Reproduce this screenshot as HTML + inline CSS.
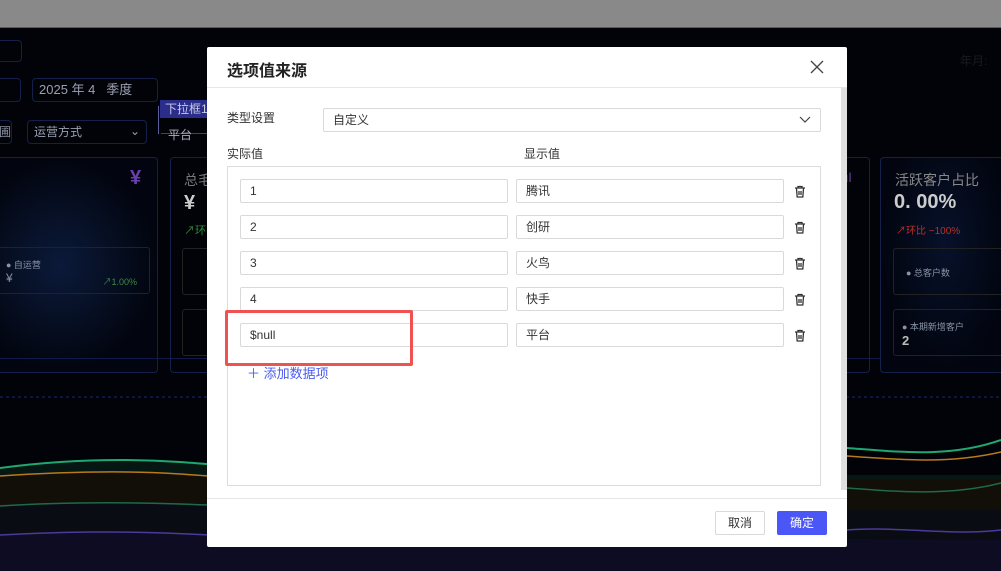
<!DOCTYPE html>
<html><head><meta charset="utf-8"><style>
*{box-sizing:border-box;margin:0;padding:0}
body{width:1001px;height:571px;overflow:hidden;position:relative;background:#020309;font-family:"Liberation Sans","Noto Sans CJK SC",sans-serif;font-size:12px}
.a{position:absolute}
.dk{border:1px solid #14204a;border-radius:4px}
.in{position:absolute;height:24px;border:1px solid #d9d9d9;border-radius:2px;background:#fff;color:#333;font-size:12px;line-height:22px;padding-left:9px}
</style></head><body>
<div class="a" style="left:0;top:0;width:1001px;height:27px;background:#898989"></div>
<div class="a" style="left:0;top:27px;width:1001px;height:1px;background:#5a5a5a"></div>
<svg class="a" style="left:0;top:380px" width="1001" height="191">
<line x1="0" y1="17" x2="1001" y2="17" stroke="#1a2a70" stroke-dasharray="3,3"/>
<path d="M0,88 C60,80 120,78 180,82 C240,86 300,95 360,88 C420,80 480,88 540,95 L1001,95 L1001,191 L0,191Z" fill="#061612"/>
<path d="M0,96 C60,92 120,90 180,94 C240,98 300,104 360,100 L1001,100 L1001,191 L0,191Z" fill="#120e08"/>
<path d="M0,126 C60,122 120,122 180,124 C240,126 300,130 360,128 L1001,130 L1001,191 L0,191Z" fill="#0a0c14"/>
<path d="M0,155 C60,152 120,150 210,155 L1001,160 L1001,191 L0,191Z" fill="#0e0c22"/>
<path d="M0,88 C60,80 120,78 180,82 C240,86 300,95 360,88" stroke="#1fa870" stroke-width="2" fill="none"/>
<path d="M0,96 C60,92 120,90 180,94 C240,98 300,104 360,100" stroke="#b87a1a" stroke-width="1.5" fill="none"/>
<path d="M0,126 C60,122 120,122 180,124 C240,126 300,130 360,128" stroke="#1e6a4a" stroke-width="1.5" fill="none"/>
<path d="M0,155 C60,152 120,150 210,155" stroke="#4a3a9a" stroke-width="1.5" fill="none"/>
<path d="M847,68 C900,72 950,78 1001,60" stroke="#1fa870" stroke-width="2" fill="none"/>
<path d="M847,76 C900,80 950,84 1001,72" stroke="#b87a1a" stroke-width="1.5" fill="none"/>
<path d="M847,108 C900,112 950,116 1001,103" stroke="#1e6a4a" stroke-width="1.5" fill="none"/>
<path d="M847,150 C900,146 950,156 1001,150" stroke="#4a3a9a" stroke-width="1.5" fill="none"/>
</svg>
<div class="a dk" style="left:-5px;top:40px;width:27px;height:22px"></div>
<div class="a dk" style="left:-5px;top:78px;width:26px;height:24px"></div>
<div class="a dk" style="left:32px;top:78px;width:126px;height:24px;color:#9aa0b0;font-size:13px;line-height:22px;padding-left:6px">2025 年 4 &nbsp;&nbsp;季度</div>
<div class="a dk" style="left:-5px;top:120px;width:17px;height:24px;color:#8a90a0;line-height:22px;text-align:right">圃</div>
<div class="a dk" style="left:27px;top:120px;width:120px;height:24px;color:#9aa0b0;line-height:22px;padding-left:6px">运营方式<span style="position:absolute;right:6px;top:-1px">⌄</span></div>
<div class="a" style="left:160px;top:100px;width:50px;height:18px;background:#2a2e8a;color:#c8cbe8;font-size:12px;line-height:18px;padding-left:5px">下拉框1</div>
<div class="a" style="left:161px;top:133px;width:50px;height:1px;background:#3a3e8a"></div>
<div class="a" style="left:158px;top:106px;width:7px;height:28px;border-left:1px solid #5a5e9a"></div>
<div class="a" style="left:168px;top:126px;color:#aab0c0">平台</div>
<div class="a dk" style="left:-5px;top:157px;width:163px;height:216px;background:radial-gradient(ellipse at 40% 50%,#0b1a3a,#02050f 70%)"></div>
<div class="a" style="left:130px;top:167px;color:#6a3fae;font-size:20px;font-weight:bold">¥</div>
<div class="a" style="left:-5px;top:247px;width:155px;height:47px;border:1px solid #222;border-radius:3px;color:#8b93a6;font-size:9px;padding:10px 0 0 10px">● 自运营<br><span style="font-size:12px">¥</span><span style="position:absolute;right:12px;top:27px;color:#3c8a40">↗1.00%</span></div>
<div class="a dk" style="left:170px;top:157px;width:40px;height:216px"></div>
<div class="a" style="left:184px;top:170px;color:#777;font-size:14px">总毛</div>
<div class="a" style="left:184px;top:192px;color:#ccc;font-size:20px;font-weight:bold">¥</div>
<div class="a" style="left:184px;top:222px;color:#2f8c3a;font-size:11px">↗环</div>
<div class="a" style="left:182px;top:248px;width:30px;height:47px;border:1px solid #222;border-radius:3px"></div>
<div class="a" style="left:182px;top:309px;width:30px;height:47px;border:1px solid #222;border-radius:3px"></div>
<div class="a" style="left:0;top:358px;width:1001px;height:1px;background:#0f1a4a"></div>
<div class="a dk" style="left:840px;top:157px;width:30px;height:216px"></div>
<div class="a" style="left:845px;top:170px;color:#6a3fae;font-size:13px">ıl</div>
<div class="a dk" style="left:880px;top:157px;width:130px;height:216px;background:radial-gradient(ellipse at 50% 40%,#07112a,#02050f 70%)"></div>
<div class="a" style="left:895px;top:170px;color:#888;font-size:14px">活跃客户占比</div>
<div class="a" style="left:894px;top:191px;color:#ccc;font-size:20px;font-weight:bold">0. 00%</div>
<div class="a" style="left:896px;top:222px;color:#b8302a;font-size:10px">↗环比 −100%</div>
<div class="a" style="left:893px;top:248px;width:120px;height:47px;border:1px solid #222;border-radius:3px;color:#8b93a6;font-size:9px;padding:17px 0 0 12px">● 总客户数</div>
<div class="a" style="left:893px;top:309px;width:120px;height:47px;border:1px solid #222;border-radius:3px;color:#8b93a6;font-size:9px;padding:10px 0 0 8px">● 本期新增客户<br><span style="font-size:13px;color:#bbb;font-weight:bold">2</span></div>
<div class="a" style="left:960px;top:52px;color:#1a1a22;font-size:12px">年月:</div>
<div class="a" style="left:207px;top:47px;width:640px;height:500px;background:#fff;border-radius:2px">
 <div class="a" style="left:20px;top:10px;font-size:16px;color:#222;font-weight:bold">选项值来源</div>
 <svg class="a" style="left:603px;top:13px" width="14" height="14"><path d="M1,1L13,13M13,1L1,13" stroke="#444" stroke-width="1.3"/></svg>
 <div class="a" style="left:0;top:40px;width:640px;height:1px;background:#e6e6e6"></div>
 <div class="a" style="left:634px;top:41px;width:6px;height:402px;background:#e0e0e0"></div>
 <div class="a" style="left:20px;top:62px;color:#333">类型设置</div>
 <div class="in" style="left:116px;top:61px;width:498px">自定义<svg style="position:absolute;right:9px;top:7px" width="12" height="8"><path d="M1,1L6,6L11,1" stroke="#444" fill="none" stroke-width="1.2"/></svg></div>
 <div class="a" style="left:20px;top:98px;color:#333">实际值</div>
 <div class="a" style="left:317px;top:98px;color:#333">显示值</div>
 <div class="a" style="left:20px;top:119px;width:594px;height:320px;border:1px solid #dcdcdc"></div>
 <div class="in" style="left:33px;top:132px;width:268px">1</div><div class="in" style="left:309px;top:132px;width:268px">腾讯</div>
 <div class="in" style="left:33px;top:168px;width:268px">2</div><div class="in" style="left:309px;top:168px;width:268px">创研</div>
 <div class="in" style="left:33px;top:204px;width:268px">3</div><div class="in" style="left:309px;top:204px;width:268px">火鸟</div>
 <div class="in" style="left:33px;top:240px;width:268px">4</div><div class="in" style="left:309px;top:240px;width:268px">快手</div>
 <div class="in" style="left:33px;top:276px;width:268px">$null</div><div class="in" style="left:309px;top:276px;width:268px">平台</div>
 <svg class="a" style="left:586px;top:138px" width="14" height="160">
  <g id="t" fill="none" stroke="#333" stroke-width="1.3"><path d="M2,3H12M5,3V1.5H9V3M3.5,3.5L4.2,12H9.8L10.5,3.5M6,6V10M8,6V10"/></g>
  <use href="#t" y="36"/><use href="#t" y="72"/><use href="#t" y="108"/><use href="#t" y="144"/>
 </svg>
 <div class="a" style="left:40px;top:316px;color:#4a5cf0;font-size:13px">＋ 添加数据项</div>
 <div class="a" style="left:18px;top:263px;width:188px;height:56px;border:3px solid #f05252;border-radius:2px"></div>
 <div class="a" style="left:0;top:451px;width:640px;height:1px;background:#e6e6e6"></div>
 <div class="a" style="left:508px;top:464px;width:50px;height:24px;border:1px solid #d9d9d9;border-radius:2px;text-align:center;line-height:22px;color:#333">取消</div>
 <div class="a" style="left:570px;top:464px;width:50px;height:24px;background:#4a56f5;border-radius:2px;text-align:center;line-height:24px;color:#fff">确定</div>
</div>
</body></html>
